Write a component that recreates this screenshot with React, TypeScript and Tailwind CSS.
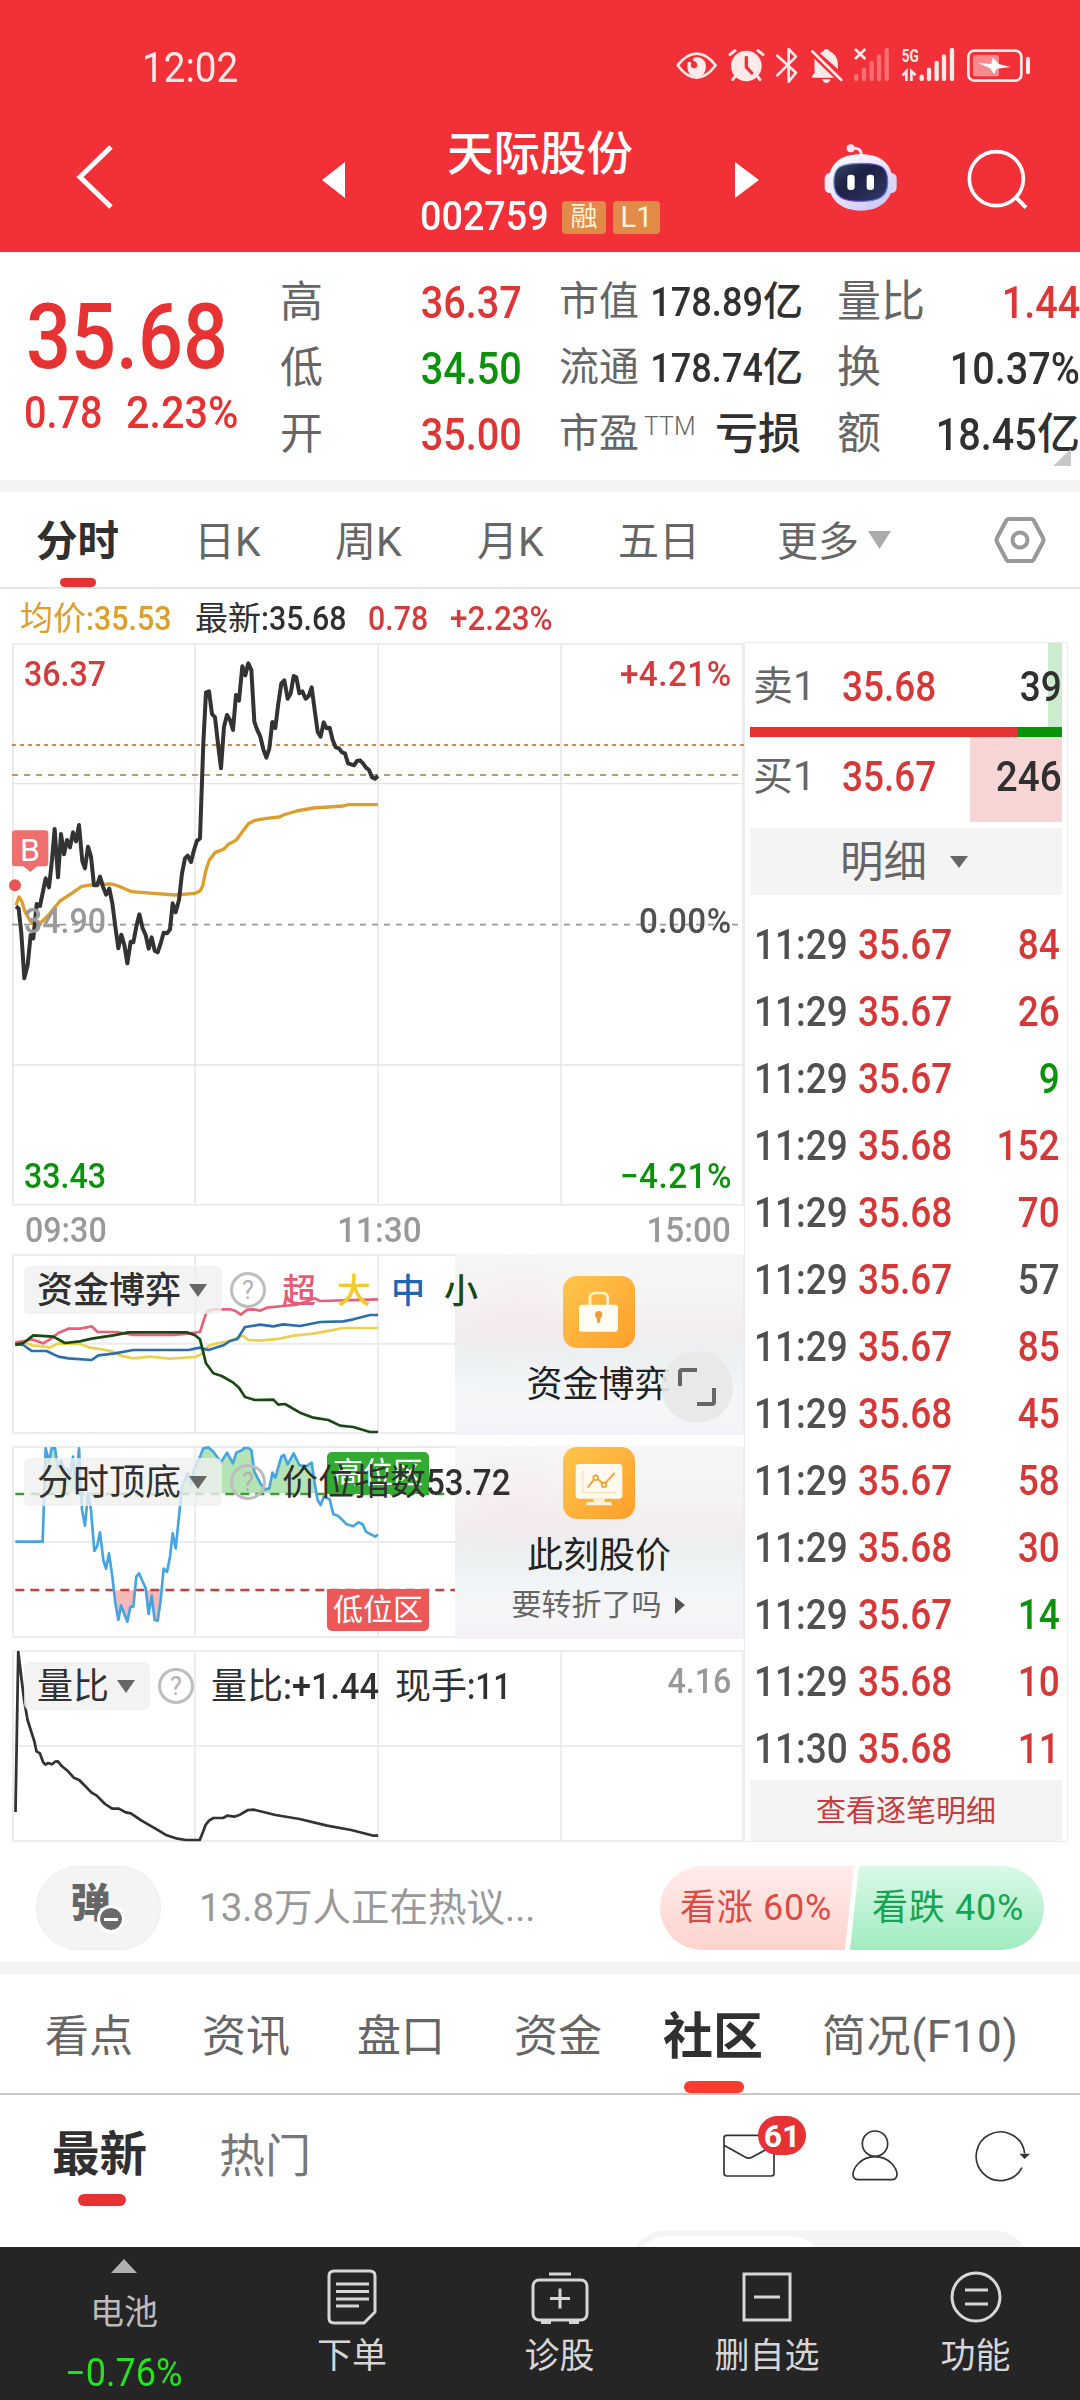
import React from "react";

type Side = "l" | "r" | "c";

/** Condensed figures, used for every price and amount. */
function Num({ children, side = "l", fit = "tight", className = "" }: { children: React.ReactNode; side?: Side; fit?: "tight" | "mid" | "wide"; className?: string }) {
  const origin =
    side === "l" ? "origin-left" : side === "r" ? "origin-right" : "origin-center";
  const scale = fit === "tight" ? "scale-x-[0.88]" : fit === "mid" ? "scale-x-[0.92]" : "scale-x-[0.95]";
  return (
    <span className={`inline-block whitespace-nowrap ${scale} ${origin} ${className || "font-medium"}`}>{children}</span>
  );
}

function StatusIcons() {
  return (
    <svg className="h-[40px] w-[370px]" viewBox="30 45 1110 120" fill="none">
      <g stroke="#ffe9e9" fill="none" strokeWidth="8" strokeLinecap="round" strokeLinejoin="round">
        <path d="M53 106Q80 71 110 71Q140 71 167 106Q140 143 110 143Q80 143 53 106Z" />
        <path d="M352 77L408 128L386 155V57L408 80L352 136" />
        <path d="M210 74L225 62M309 74L294 62" strokeWidth="9" />
        <path d="M225 140L218 149M293 140L300 149" strokeWidth="9" />
      </g>
      <path d="M83 98Q78 140 112 140Q138 138 138 107Q136 84 113 82Q97 80 100 92Q113 95 112 107Q108 117 98 114Q89 110 94 100Q90 92 83 98Z" fill="#ffe9e9" />
      <circle cx="259" cy="108" r="46" fill="#ffe9e9" />
      <path d="M259 82V111L275 129" stroke="#f13038" strokeWidth="10" strokeLinecap="round" />
      <path d="M480 70Q485 66 490 64Q492 57 499 57Q506 57 509 64Q534 74 534 105V118ZM463 86L522 143H456V138L464 128Z" fill="#ffe9e9" />
      <path d="M486 148H512Q508 159 499 159Q490 159 486 148Z" fill="#ffe9e9" />
      <path d="M457 64L544 150" stroke="#ffe9e9" strokeWidth="8" strokeLinecap="round" />
      <path d="M585 57L616 87M616 57L585 87" stroke="#ffe9e9" strokeWidth="8" />
      <g stroke="#fa6e74" strokeWidth="13" strokeLinecap="round">
        <path d="M589 138V147M612 119V147M635 99V147M657 79V147M680 60V147" />
      </g>
      <text x="725" y="97" fontSize="57" fontWeight="700" textLength="51" lengthAdjust="spacingAndGlyphs" fill="#ffe9e9" fontFamily="Roboto">5G</text>
      <path d="M728 136L739 124V153M754 153V124L767 136" stroke="#ffe9e9" strokeWidth="8" />
      <g stroke="#ffe9e9" strokeWidth="13" strokeLinecap="round">
        <path d="M785 140V147M807 119V147M830 99V147M852 79V147M876 60V147" />
      </g>
      <rect x="925" y="62" width="159" height="90" rx="18" stroke="#ffe9e9" strokeWidth="8" />
      <rect x="939" y="75" width="78" height="64" rx="8" fill="#fa8a8e" />
      <path d="M998 82L1016 102L1052 111L1010 116L1002 132L990 115L955 99L994 102Z" fill="#fff" />
      <rect x="1098" y="80" width="12" height="53" rx="6" fill="#ffe9e9" />
    </svg>
  );
}

function Robot() {
  return (
    <svg className="h-[70px] w-[75px]" viewBox="490 335 225 210">
      <defs>
        <linearGradient id="shell" x1="0" y1="0" x2="0.7" y2="1">
          <stop offset="0" stopColor="#ffffff" />
          <stop offset="0.5" stopColor="#ece8fb" />
          <stop offset="1" stopColor="#cfc9f6" />
        </linearGradient>
        <linearGradient id="rim" x1="0" y1="0" x2="1" y2="0.5">
          <stop offset="0" stopColor="#8be2f0" />
          <stop offset="0.6" stopColor="#7a3be0" />
          <stop offset="1" stopColor="#5a78ea" />
        </linearGradient>
        <linearGradient id="face" x1="0" y1="0" x2="1" y2="1">
          <stop offset="0" stopColor="#3d4368" />
          <stop offset="0.4" stopColor="#1b2143" />
          <stop offset="1" stopColor="#333a66" />
        </linearGradient>
      </defs>
      <path d="M577 354Q605 350 605 375" stroke="#f3e4f4" strokeWidth="9" fill="none" />
      <circle cx="573" cy="354" r="12" fill="#f3e4f4" />
      <rect x="495" y="428" width="40" height="60" rx="16" fill="#ece9fb" />
      <rect x="671" y="428" width="40" height="60" rx="16" fill="#dad6f8" />
      <path d="M603 372C665 372 699 402 699 456C699 510 660 541 603 541C546 541 507 510 507 456C507 402 541 372 603 372Z" fill="url(#shell)" />
      <path d="M603 399C666 399 684 410 684 455C684 500 658 513 603 513C548 513 522 500 522 455C522 410 540 399 603 399Z" fill="url(#face)" stroke="url(#rim)" strokeWidth="4" />
      <rect x="563" y="433" width="22" height="46" rx="9" fill="#fff" />
      <rect x="621" y="433" width="22" height="46" rx="9" fill="#fff" />
    </svg>
  );
}

function Header() {
  return (
    <header className="h-[252px] shrink-0 bg-[#f13038] text-white">
      <div className="flex h-[134px] items-center">
        <Num fit="mid" className="ml-[142px] w-[109px] text-[42px] font-normal text-[#ffe9e9]">12:02</Num>
        <span className="ml-[419px] -mt-1 flex"><StatusIcons /></span>
      </div>
      <div className="flex h-[117px]">
        <svg className="ml-[74px] mt-[9px] h-[68px] w-[42px]" viewBox="0 0 42 68" fill="none">
          <path d="M37 4L6 34L37 64" stroke="#fff" strokeWidth="5" />
        </svg>
        <svg className="ml-[206px] mt-[28px] h-[36px] w-[23px]" viewBox="0 0 23 36"><path d="M23 0V36L0 18Z" fill="#fff" /></svg>
        <div className="flex w-[390px] flex-col items-center">
          <div className="-mt-[4px] text-[46.500px] font-medium leading-[48px]">天际股份</div>
          <div className="mt-[15px] flex h-[48px] items-center">
            <Num fit="mid" className="w-[142px] text-[41px] font-medium">002759</Num>
            <span className="flex h-[33px] w-[44px] items-center justify-center rounded-[4px] bg-[#e28b48] text-[27px] leading-none text-[#fdf3dc]">融</span>
            <span className="ml-[7px] flex h-[33px] w-[47px] items-center justify-center rounded-[4px] bg-[#e28b48] text-[29px] leading-none text-[#fdf3dc]">L1</span>
          </div>
        </div>
        <svg className="mt-[28px] h-[36px] w-[24px]" viewBox="0 0 24 36"><path d="M0 0V36L24 18Z" fill="#fff" /></svg>
        <span className="ml-[64px] mt-[8px]"><Robot /></span>
        <svg className="ml-[67px] mt-[13px] h-[65px] w-[65px]" viewBox="910 350 195 195" fill="none" stroke="#fff">
          <circle cx="1004" cy="445" r="81" strokeWidth="11" />
          <path d="M1062 500L1093 532" strokeWidth="12" />
        </svg>
      </div>
    </header>
  );
}

const RED = "text-[#e03535]";
const GREEN = "text-[#0a930a]";
const DARK = "text-[#303030]";

const stats = [
  { a: "高", av: "36.37", ac: RED, b: "市值", bv: "178.89", c: "量比", cv: "1.44", cu: "", cc: RED },
  { a: "低", av: "34.50", ac: GREEN, b: "流通", bv: "178.74", c: "换", cv: "10.37%", cu: "", cc: DARK },
  { a: "开", av: "35.00", ac: RED, b: "市盈", bv: "", c: "额", cv: "18.45", cu: "亿", cc: DARK },
];

function Quote() {
  return (
    <section className="relative flex h-[228px] shrink-0">
      <div className="w-[280px] pt-[41px] leading-none text-[#e63232]">
        <Num className="ml-[26px] text-[90px] font-medium leading-none">35.68</Num>
        <div className="mt-[7px] flex text-[45px]">
          <Num className="ml-[24px] w-[102px] font-medium">0.78</Num>
          <Num fit="mid">2.23%</Num>
        </div>
      </div>
      <div className="w-[800px] pt-[17px]">
        {stats.map((s) => (
          <div key={s.a} className="flex h-[66px] items-center whitespace-nowrap text-[43px] leading-none text-[#666]">
            <span className="w-[60px]">{s.a}</span>
            <span className={`w-[182px] text-right ${s.ac}`}><Num side="r" className="text-[45px] font-medium">{s.av}</Num></span>
            <span className="ml-[37px] flex w-[242px] items-center text-[40px]">
              <span>{s.b}</span>
              {s.bv ? (
                <span className={`ml-auto flex items-center ${DARK}`}>
                  <Num side="r" className="-ml-[20px] text-[41px] font-medium">{s.bv}</Num>
                  <span className="w-[38px] font-medium">亿</span>
                </span>
              ) : (
                <>
                  <span className="mb-[16px] ml-[5px] text-[25px] font-light">TTM</span>
                  <span className={`ml-auto text-[43px] font-medium ${DARK}`}>亏损</span>
                </>
              )}
            </span>
            <span className="ml-[36px] w-[90px] text-[44px]">{s.c}</span>
            <span className={`flex w-[153px] items-center justify-end ${s.cc}`}>
              <Num side="r" className="text-[45px] font-medium">{s.cv}</Num>
              {s.cu && <span className="font-medium">{s.cu}</span>}
            </span>
          </div>
        ))}
      </div>
      <svg className="absolute bottom-[14px] right-[9px] h-[17px] w-[18px]" viewBox="0 0 18 17"><path d="M18 0V17H0Z" fill="#c8c8c8" /></svg>
    </section>
  );
}

function PeriodTabs() {
  return (
    <nav className="flex h-[97px] shrink-0 items-center border-b-2 border-[#e6e6e6] pt-[5px] text-[41px] leading-none text-[#666]">
      <div className="relative ml-[36px] w-[158px] text-[41.500px] font-bold text-[#303030]">
        分时
        <span className="absolute left-[24px] top-[57px] h-[9px] w-[36px] rounded-full bg-[#e63232]" />
      </div>
      <span className="w-[141px]">日K</span>
      <span className="w-[142px]">周K</span>
      <span className="w-[141px]">月K</span>
      <span className="w-[159px]">五日</span>
      <span className="w-[91px]">更多</span>
      <svg className="-mt-[4px] h-[18px] w-[23px]" viewBox="0 0 23 18"><path d="M0 0H23L11.500 18Z" fill="#aaa" /></svg>
      <svg className="-mt-[5px] ml-[103px] h-[48px] w-[52px]" viewBox="0 0 52 48" fill="none" stroke="#999" strokeWidth="4" strokeLinejoin="round">
        <path d="M15 3H37Q39 3 40 5L49 22Q50 24 49 26L40 43Q39 45 37 45H15Q13 45 12 43L3 26Q2 24 3 22L12 5Q13 3 15 3Z" />
        <circle cx="26" cy="24" r="7.500" />
      </svg>
    </nav>
  );
}

const pricePath =
  "M48 799L56 806L64 880L73 1015L83 975L92 885L100 895L110 792L120 798L137 715L147 742L156 660L164 567L174 712L183 582L192 643L201 600L210 622L219 577L228 604L237 555L247 664L255 685L264 620L273 650L282 736L291 736L300 710L309 740L318 764L328 746L337 790L346 860L355 925L364 884L373 915L382 970L392 905L400 907L409 860L418 823L428 865L437 885L446 926L455 892L464 932L473 937L482 910L491 878L501 880L510 868L518 790L527 817L537 780L546 700L555 655L563 647L573 666L582 630L591 602L600 595L610 310L618 157L627 154L636 222L645 232L655 320L663 385L672 260L681 225L690 240L699 270L708 165L717 182L727 79L736 106L745 70L754 90L763 245L771 268L781 290L790 328L799 353L808 325L817 246L826 264L835 190L844 130L853 121L863 176L872 160L881 108L889 112L898 160L907 154L917 176L926 168L935 142L944 210L953 275L962 290L971 247L980 265L989 263L998 300L1007 322L1017 325L1026 337L1035 340L1044 370L1062 376L1071 363L1080 361L1089 370L1098 383L1107 390L1116 412L1125 416L1134 408";
const avgPath =
  "M48 795L57 771L66 785L75 815L95 850L125 846L150 820L180 783L215 760L245 739L280 734L335 732L360 740L395 755L460 760L525 765L585 760L600 753L608 738L618 690L628 660L645 638L672 627L685 613L708 601L745 551L765 541L800 535L838 531L850 525L890 513L940 504L1030 498L1045 494H1134";

function MainChart() {
  return (
    <div className="relative h-[566px] w-[744px]">
      <svg className="h-[566px] w-[744px]" viewBox="0 0 2232 1698" fill="none">
        <g stroke="#ececec" strokeWidth="6">
          <path d="M36 12H2232M36 1694H2232M39 12V1694M585 12V1694M1134 12V1694M1683 12V1694M2229 12V1694" />
          <path d="M36 431H2232M36 1275H2232" strokeWidth="4" stroke="#e4e4e4" />
        </g>
        <path d="M36 315H2232" stroke="#d08a4c" strokeWidth="6" strokeDasharray="12 12" />
        <path d="M36 405H2214" stroke="#b99c6b" strokeWidth="6" strokeDasharray="18 18" />
        <path d="M36 854H2214" stroke="#999" strokeWidth="5" strokeDasharray="18 18" />
        <path d={avgPath} stroke="#dc9e2c" strokeWidth="10" strokeLinejoin="round" />
        <path d={pricePath} stroke="#333" strokeWidth="12" strokeLinejoin="round" />
        <circle cx="45" cy="736" r="18" fill="#e95555" />
        <path d="M46 571H136Q145 571 145 580V670Q145 679 136 679H112L91 696L70 679H46Q36 679 36 670V580Q36 571 46 571Z" fill="#ef6e6e" />
      </svg>
      <div className="text-[35px] leading-none">
        <span className="absolute left-[20px] top-[194px] text-[32px] leading-none text-white">B</span>
        <Num fit="mid" className="absolute left-[24px] top-[17px] font-medium text-[#d23c3c]">36.37</Num>
        <Num fit="wide" side="r" className="absolute right-[12px] top-[17px] font-medium tracking-[0.5px] text-[#d23c3c]">+4.21%</Num>
        <Num fit="mid" className="absolute left-[24px] top-[264px] font-medium text-[#999]">34.90</Num>
        <Num fit="wide" side="r" className="absolute right-[12px] top-[264px] font-medium tracking-[0.5px] text-[#505050]">0.00%</Num>
        <Num fit="mid" className={`absolute left-[24px] top-[519px] font-medium ${GREEN}`}>33.43</Num>
        <Num fit="wide" side="r" className={`absolute right-[12px] top-[519px] font-medium tracking-[0.5px] ${GREEN}`}>−4.21%</Num>
      </div>
    </div>
  );
}

function Help() {
  return (
    <span className="flex size-[36px] items-center justify-center rounded-full border-[3px] border-[#bdbdbd] text-[25px] leading-none text-[#b0b0b0]">?</span>
  );
}

function Chip({ label, width }: { label: string; width: "wide" | "narrow" }) {
  return (
    <span className={`flex h-[48px] items-center rounded-[6px] bg-[#f0f0f0]/80 pl-[13px] pt-px text-[36px] leading-none text-[#303030] ${width === "wide" ? "w-[198px]" : "w-[126px]"}`}>
      {label}
      <svg className="ml-[8px] h-[13px] w-[18px]" viewBox="0 0 18 13"><path d="M0 0H18L9 13Z" fill="#666" /></svg>
    </span>
  );
}

function Promo({ children }: { children: React.ReactNode }) {
  return (
    <div className="absolute left-[455px] w-[288px] overflow-hidden bg-[linear-gradient(180deg,#f6f6f7_0%,#f5f4f5_25%,#f2edef_42%,#ecf0f1_55%,#f2f5f7_72%,#f6f5f8_85%,#f4f2f6_100%)] top-[2px] bottom-[1px]">
      <div className="absolute left-[20px] top-[34px] h-[50px] w-[90px] rounded-full bg-[#f7dfe3] opacity-50 blur-xl" />
      <div className="relative flex flex-col items-center">{children}</div>
    </div>
  );
}

function LockIcon() {
  return (
    <svg className="size-[72px]" viewBox="369 258 216 216">
      <defs><linearGradient id="gold" x1="0" y1="0" x2="1" y2="1"><stop offset="0" stopColor="#ffc64c" /><stop offset="1" stopColor="#fe9f2b" /></linearGradient></defs>
      <rect x="369" y="258" width="216" height="216" rx="42" fill="url(#gold)" />
      <path d="M450 350V325Q450 309 466 309H488Q503 309 503 325V350" fill="none" stroke="#fff3c8" strokeWidth="8" />
      <rect x="417" y="344" width="117" height="81" rx="9" fill="#fffcf4" />
      <circle cx="476" cy="374" r="11" fill="#f29a35" />
      <path d="M476 378V394" stroke="#f29a35" strokeWidth="10" strokeLinecap="round" />
    </svg>
  );
}

function ScreenIcon() {
  return (
    <svg className="size-[72px]" viewBox="369 771 216 216">
      <rect x="369" y="771" width="216" height="216" rx="42" fill="url(#gold)" />
      <rect x="407" y="822" width="140" height="104" rx="10" fill="#fff9ee" />
      <path d="M460 926H494V936H511Q516 938 516 946H438Q438 938 443 936H460Z" fill="#fff1d8" />
      <path d="M429 840V908H528" fill="none" stroke="#fbd9a8" strokeWidth="3" />
      <path d="M443 893L467 862L492 883L524 849" fill="none" stroke="#f0a848" strokeWidth="6" />
      <circle cx="467" cy="863" r="7" fill="#fff" stroke="#f0a020" strokeWidth="5" />
      <circle cx="492" cy="884" r="7" fill="#fff" stroke="#f0a020" strokeWidth="5" />
    </svg>
  );
}

function FundPanel() {
  return (
    <div className="relative h-[184px] w-[744px]">
      <svg className="h-[184px] w-[744px]" viewBox="0 276 2232 552" fill="none">
        <path d="M36 285H2232M36 551H2232M36 819H2232M39 285V819M585 285V819M1134 285V819M2229 285V819" stroke="#ececec" strokeWidth="6" />
        <g strokeWidth="8" strokeLinejoin="round">
          <path stroke="#ecd04e" d="M46 556L70 545L95 556L120 558L150 563L175 550L240 552L270 563L300 567L340 575L360 586L400 595L450 590L510 596L585 591L605 582L625 558L650 550L690 543L728 527L745 540L780 542L840 536L880 527L940 521L990 512L1030 504H1134" />
          <path stroke="#e8607a" d="M46 547L75 543L95 538L130 550L150 538L175 519L205 506L240 506L275 499L293 516H350L400 525H520L560 521L600 516L610 485L620 455L640 448H690L705 452L722 464L742 449L760 448L780 452L800 443L850 438L890 434L945 415L960 423L1134 418" />
          <path stroke="#2b6fb0" d="M46 553L70 555L95 573H140L175 590L205 595L275 600L295 586L345 580L400 570H565L600 563L625 570L670 556L690 543L712 537L735 501L780 494L820 499L850 493L900 498L960 486L1030 484L1060 478L1110 465H1134" />
          <path stroke="#164a12" d="M46 554L70 549L100 526L160 530L195 549L240 544L275 536L340 526L385 517H480L560 517L585 526L600 538L618 610L640 640L665 648L700 668L717 683L735 711L765 720L820 719L835 734L855 732L900 758L940 773L985 780L1020 797L1060 801L1110 816H1134" />
        </g>
      </svg>
      <Promo>
        <span className="mt-[22px]"><LockIcon /></span>
        <span className="mt-[19px] pr-px text-[36px] leading-none text-[#222]">资金博弈</span>
      </Promo>
      <span className="absolute left-[661px] top-[99px] flex size-[72px] items-center justify-center rounded-full bg-[#e8e8e8]/90">
        <svg className="size-[38px]" viewBox="0 0 38 38" fill="none" stroke="#666" strokeWidth="4"><path d="M2 18V4Q2 2 4 2H19M36 20V34Q36 36 34 36H19" /></svg>
      </span>
      <div className="absolute left-[24px] top-[14px] flex items-center text-[34px] font-medium leading-none">
        <Chip label="资金博弈" width="wide" />
        <span className="ml-[8px] font-normal"><Help /></span>
        <span className="ml-[16px] w-[55px] pt-[2px] text-[#ea5a72]">超</span>
        <span className="w-[54px] pt-[2px] text-[#f0cb2e]">大</span>
        <span className="w-[53px] pt-[2px] text-[#1e67b0]">中</span>
        <span className="pt-[2px] text-[#164a12]">小</span>
      </div>
    </div>
  );
}

const topPath =
  "M46 1145H128L137 865L147 905L155 865L165 865L174 925L183 900L192 930L201 925L210 945L219 890L228 985L237 865L246 1050L255 1097L264 1000L273 1050L283 1173L291 1160L300 1117L310 1200L318 1226L327 1180L337 1250L346 1330L355 1380L363 1336L382 1385L391 1340L400 1340L409 1250L417 1240L437 1285L446 1362L455 1307L464 1380L473 1382L482 1320L491 1226L501 1236L510 1190L518 1120L527 1165L537 1070L546 980L563 940L573 975L582 930L600 890L610 865L625 862L640 875L663 907L681 878L699 910L709 878L727 870L733 864H745L754 870L763 935L781 970L795 988L808 985L817 938L826 953L844 890L852 885L863 913L881 880L898 915L917 920L935 908L944 970L953 1020L962 1035L971 1010L989 1018L1000 1063L1015 1068L1040 1093L1060 1099L1075 1087L1088 1093L1098 1115L1125 1130L1134 1124";

function PositionPanel() {
  return (
    <div className="relative mt-[8px] h-[196px] w-[744px]">
      <svg className="h-[196px] w-[744px]" viewBox="0 852 2232 588" fill="none">
        <defs>
          <clipPath id="high"><rect x="46" y="852" width="915" height="148" /></clipPath>
          <clipPath id="low"><rect x="320" y="1291" width="180" height="110" /></clipPath>
        </defs>
        <path d="M36 861H2232M36 1146H2232M36 1431H2232M39 861V1431M585 861V1431M1134 861V1431M2229 861V1431" stroke="#ececec" strokeWidth="6" />
        <path d={topPath + "V1145Z"} fill="#b4e4b4" clipPath="url(#high)" />
        <path d={topPath + "V1145Z"} fill="#f6b9b9" clipPath="url(#low)" />
        <path d="M46 1002H1365" stroke="#38a030" strokeWidth="7" strokeDasharray="27 18" />
        <path d="M46 1290H1365" stroke="#d23c3c" strokeWidth="7" strokeDasharray="27 18" />
        <path d={topPath} stroke="#45a5e2" strokeWidth="8" strokeLinejoin="round" />
      </svg>
      <span className="absolute left-[327px] top-[8px] flex h-[42px] w-[102px] items-center justify-center rounded-t-[5px] bg-[#31ab31] text-[30px] leading-none text-white">高位区</span>
      <span className="absolute left-[327px] top-[145px] flex h-[42px] w-[102px] items-center justify-center rounded-b-[5px] bg-[#ec5858] text-[30px] leading-none text-white">低位区</span>
      <Promo>
        <span className="mt-px"><ScreenIcon /></span>
        <span className="mt-[19px] text-[36px] leading-none text-[#222]">此刻股价</span>
        <span className="mt-[16px] flex items-center pr-[2px] text-[30px] leading-none text-[#666]">
          要转折了吗
          <svg className="ml-[13px] h-[18px] w-[10px]" viewBox="0 0 10 18"><path d="M0 1L10 9L0 18Z" fill="#555" /></svg>
        </span>
      </Promo>
      <div className="absolute left-[24px] top-[14px] flex items-center text-[36px] leading-none text-[#303030]">
        <Chip label="分时顶底" width="wide" />
        <span className="ml-[8px]"><Help /></span>
        <span className="ml-[16px] pt-px">价位指数</span>
        <Num fit="mid" className="pt-px font-medium">53.72</Num>
      </div>
    </div>
  );
}

function VolumePanel() {
  return (
    <div className="relative mt-[8px] h-[196px] w-[744px]">
      <svg className="h-[196px] w-[744px]" viewBox="0 54 2160.6 588" preserveAspectRatio="none" fill="none">
        <path d="M35 63H2160M35 348H2160M35 633H2160M38 63V633M566 63V633M1098 63V633M1629 63V633M2157 63V633" stroke="#ececec" strokeWidth="6" />
        <path d="M45 546L53 66L70 210L80 270L100 335L106 364L116 370L125 396L132 404L140 399L151 403L160 395L168 394L180 409L196 422L214 443L230 450L266 488L280 496L305 522L326 536H345L365 547L380 550L410 571L435 586L465 604L482 615L515 626L540 630H580L588 610L597 585L607 572L620 564H648L660 557L680 560L697 554L720 540L738 539L800 555L870 567L950 587L1020 600L1085 617H1098" stroke="#333" strokeWidth="8" strokeLinejoin="round" />
      </svg>
      <div className="absolute left-[24px] right-[13px] top-[14px] flex items-center text-[36px] leading-none text-[#303030]">
        <Chip label="量比" width="narrow" />
        <span className="ml-[8px]"><Help /></span>
        <span className="ml-[17px] pt-px">量比</span>
        <Num fit="wide" className="w-[112px] pt-px font-medium">:+1.44</Num>
        <span className="pt-px">现手</span>
        <Num className="pt-px font-medium">:11</Num>
        <Num side="r" fit="mid" className="-mt-[9px] ml-auto text-[35px] font-medium text-[#999]">4.16</Num>
      </div>
    </div>
  );
}

const trades: [string, string, string, boolean | null][] = [
  ["11:29", "35.67", "84", true],
  ["11:29", "35.67", "26", true],
  ["11:29", "35.67", "9", false],
  ["11:29", "35.68", "152", true],
  ["11:29", "35.68", "70", true],
  ["11:29", "35.67", "57", null],
  ["11:29", "35.67", "85", true],
  ["11:29", "35.68", "45", true],
  ["11:29", "35.67", "58", true],
  ["11:29", "35.68", "30", true],
  ["11:29", "35.67", "14", false],
  ["11:29", "35.68", "10", true],
  ["11:30", "35.68", "11", true],
];

function OrderBook() {
  return (
    <aside className="mt-[2px] flex h-[1200px] w-[324px] flex-col border border-[#ececec] px-[5px] text-[42px] leading-none">
      <div className="relative flex h-[84px] shrink-0 items-center pt-[3px]">
        <span className="absolute right-0 top-0 h-full w-[14px] bg-[#cdebcd]" />
        <span className="w-[92px] pl-[3px] text-[40px] text-[#666]">卖1</span>
        <Num className="font-medium text-[#d63838]">35.68</Num>
        <Num side="r" className={`ml-auto font-medium ${DARK}`}>39</Num>
      </div>
      <div className="flex h-[10px] shrink-0 bg-[#e63232]"><span className="ml-auto h-full w-[44px] bg-[#0a930a]" /></div>
      <div className="relative flex h-[85px] shrink-0 items-center pb-[6px]">
        <span className="absolute right-0 top-0 h-full w-[92px] bg-[#f9d6d6]" />
        <span className="w-[92px] pl-[3px] text-[40px] text-[#666]">买1</span>
        <Num className="font-medium text-[#d63838]">35.67</Num>
        <Num side="r" fit="mid" className={`ml-auto font-medium ${DARK}`}>246</Num>
      </div>
      <div className="mt-[6px] flex h-[67px] shrink-0 items-center bg-[#f4f4f4] pl-[90px] pt-[3px] text-[43.500px] text-[#666]">
        明细
        <svg className="-mt-[2px] ml-[23px] h-[12px] w-[18px]" viewBox="0 0 18 12"><path d="M0 0H18L9 12Z" fill="#666" /></svg>
      </div>
      <div className="mt-[14px]">
        {trades.map(([t, p, v, up], i) => (
          <div key={i} className="flex h-[67px] items-center pr-[2px] pt-[4px]">
            <Num className="ml-[4px] w-[104px] font-medium text-[#505050]">{t}</Num>
            <Num className="font-medium text-[#d63838]">{p}</Num>
            <Num side="r" className={`ml-auto font-medium ${up === null ? "text-[#505050]" : up ? "text-[#d63838]" : GREEN}`}>{v}</Num>
          </div>
        ))}
      </div>
      <div className="flex h-[61px] shrink-0 items-center justify-center bg-[#f4f4f4] text-[30px] text-[#c83c3c]">查看逐笔明细</div>
    </aside>
  );
}

function Discussion() {
  return (
    <section className="flex h-[118px] shrink-0 items-center pt-[10px] leading-none">
      <span className="relative ml-[36px] flex h-[84px] w-[125px] items-center justify-center rounded-full border border-[#ececec] bg-[#f4f4f4] text-[40px] font-black text-[#666]">
        <span className="-ml-[16px] -mt-[8px]">弹</span>
        <span className="absolute left-[63px] top-[41px] flex size-[22px] items-center justify-center rounded-full bg-[#6a6a6a] outline-[3px] outline-white"><span className="h-[3px] w-[14px] bg-white" /></span>
      </span>
      <span className="ml-[38px] w-[461px] text-[38.500px] text-[#999]">13.8万人正在热议...</span>
      <span className="flex h-[84px] w-[194px] items-center rounded-l-full bg-gradient-to-b from-[#ffecea] to-[#fdd3ce] pl-[20px] text-[36px] tracking-[0.7px] text-[#dc4a44] [clip-path:polygon(0_0,100%_0,185px_100%,0_100%)]">看涨 60%</span>
      <span className="-ml-[4px] flex h-[84px] w-[194px] items-center rounded-r-full bg-gradient-to-b from-[#daf9e8] to-[#a0ebc0] pl-[22px] text-[36px] tracking-[0.7px] text-[#14a554] [clip-path:polygon(9px_0,100%_0,100%_100%,0_100%)]">看跌 40%</span>
    </section>
  );
}

function Community() {
  return (
    <>
      <nav className="flex h-[121px] shrink-0 items-center border-b-2 border-[#c8c8c8] pt-[7px] text-[44px] leading-none text-[#666]">
        <span className="ml-[45px] w-[157px]">看点</span>
        <span className="w-[155px]">资讯</span>
        <span className="w-[157px]">盘口</span>
        <span className="w-[149px]">资金</span>
        <span className="relative w-[159px] text-[50px] font-bold text-[#303030]">
          社区
          <span className="absolute left-[21px] top-[69px] h-[12px] w-[60px] rounded-full bg-[#fb3b30]" />
        </span>
        <span className="whitespace-nowrap tracking-[0.6px]">简况(F10)</span>
      </nav>
      <section className="relative flex h-[152px] shrink-0 overflow-hidden leading-none">
        <span className="relative ml-[52px] mt-[37px] w-[167px] text-[47.500px] font-bold text-[#303030]">
          最新
          <span className="absolute left-[26px] top-[62px] h-[12px] w-[48px] rounded-full bg-[#e63232]" />
        </span>
        <span className="mt-[38px] w-[499px] text-[46px] text-[#777]">热门</span>
        <svg className="mt-[33px] h-[54px] w-[320px]" viewBox="54 52 960 162" fill="none" stroke="#333" strokeWidth="5" strokeLinejoin="round">
          <rect x="72" y="74" width="150" height="122" rx="8" />
          <path d="M72 104L135 139Q146 146 157 139L222 104" />
          <circle cx="525" cy="99" r="38" />
          <path d="M525 138C570 138 591 175 591 192Q590 207 575 207H475Q460 207 459 192C459 175 480 138 525 138Z" />
          <path d="M966 171A73 73 0 1 1 974 128" />
          <path d="M958 129H990L974 145Z" fill="#333" stroke="none" />
        </svg>
        <span className="absolute left-[758px] top-[21px] flex h-[39px] w-[48px] items-center justify-center rounded-full bg-[#e63232] text-[32px] font-bold text-white">61</span>
        <div className="absolute left-[628px] top-[135px] h-[80px] w-[404px] rounded-full bg-[#f4f4f4] p-[6px]"><div className="h-full w-[190px] rounded-full bg-white" /></div>
      </section>
    </>
  );
}

function BottomBar() {
  return (
    <footer className="flex h-[153px] shrink-0 bg-[#252525] text-[35px] leading-none text-[#d6d6d6]">
      <div className="flex w-[248px] flex-col items-center">
        <svg className="mt-[12px] h-[14px] w-[26px]" viewBox="0 0 26 14"><path d="M13 0L26 14H0Z" fill="#b0b0b0" /></svg>
        <span className="mt-[22px] text-[34px] text-[#bbb]">电池</span>
        <Num side="c" fit="wide" className="mt-[25px] text-[38px] font-normal text-[#23e323]">−0.76%</Num>
      </div>
      <div className="flex w-[208px] flex-col items-center">
        <svg className="mt-[22px] h-[56px] w-[50px]" viewBox="0 0 50 56" fill="none" stroke="#d6d6d6" strokeWidth="3">
          <path d="M7 2H43Q48 2 48 7V43L37 54H7Q2 54 2 49V7Q2 2 7 2Z" />
          <path d="M9 15H42M9 22.500H42M9 30H42M9 37H32" />
        </svg>
        <span className="mt-[14px]">下单</span>
      </div>
      <div className="flex w-[207px] flex-col items-center">
        <svg className="mt-[24px] h-[54px] w-[58px]" viewBox="0 0 58 54" fill="none" stroke="#d6d6d6" strokeWidth="3">
          <rect x="2" y="9" width="54" height="40" rx="6" />
          <path d="M18 3H40M19 27.500H39M29 17.500V37.500M10 51.500H20M38 51.500H48" />
        </svg>
        <span className="mt-[14px]">诊股</span>
      </div>
      <div className="flex w-[208px] flex-col items-center">
        <svg className="mt-[25px] h-[50px] w-[50px]" viewBox="0 0 50 50" fill="none" stroke="#d6d6d6" strokeWidth="3">
          <path d="M2 2H48V48H2ZM12 25H38" />
        </svg>
        <span className="mt-[17px]">删自选</span>
      </div>
      <div className="flex w-[209px] flex-col items-center">
        <svg className="mt-[24px] h-[52px] w-[52px]" viewBox="0 0 52 52" fill="none" stroke="#d6d6d6" strokeWidth="3">
          <circle cx="26" cy="26" r="24" />
          <path d="M15 19H38M15 33H38" />
        </svg>
        <span className="mt-[16px]">功能</span>
      </div>
    </footer>
  );
}

export default function App() {
  return (
    <main className="flex h-[2400px] w-[1080px] flex-col overflow-hidden bg-white font-[Roboto,'Noto_Sans_CJK_SC',sans-serif]">
      <Header />
      <Quote />
      <div className="h-[12px] shrink-0 bg-[#f4f4f4]" />
      <PeriodTabs />
      <div className="flex h-[51px] shrink-0 items-center pt-[8px] text-[33px] leading-none">
        <span className="ml-[20px] text-[#dc9e2c]">均价</span>
        <Num fit="mid" className="w-[109px] font-medium text-[#dc9e2c]">:35.53</Num>
        <span className={DARK}>最新</span>
        <Num fit="mid" className={`w-[107px] font-medium ${DARK}`}>:35.68</Num>
        <Num fit="mid" className="w-[82px] font-medium text-[#d23c3c]">0.78</Num>
        <Num fit="wide" className="font-medium text-[#d23c3c]">+2.23%</Num>
      </div>
      <div className="flex h-[1204px] shrink-0">
        <div className="w-[744px]">
          <MainChart />
          <div className="relative flex h-[46px] items-center pt-[3px] text-[35px] leading-none text-[#999]">
            <Num fit="mid" className="ml-[25px] font-medium">09:30</Num>
            <Num side="c" fit="wide" className="absolute left-[335px] font-medium">11:30</Num>
            <Num side="r" fit="wide" className="ml-auto mr-[13px] font-medium">15:00</Num>
          </div>
          <FundPanel />
          <PositionPanel />
          <VolumePanel />
        </div>
        <OrderBook />
      </div>
      <Discussion />
      <div className="h-[12px] shrink-0 bg-[#f4f4f4]" />
      <Community />
      <BottomBar />
    </main>
  );
}
